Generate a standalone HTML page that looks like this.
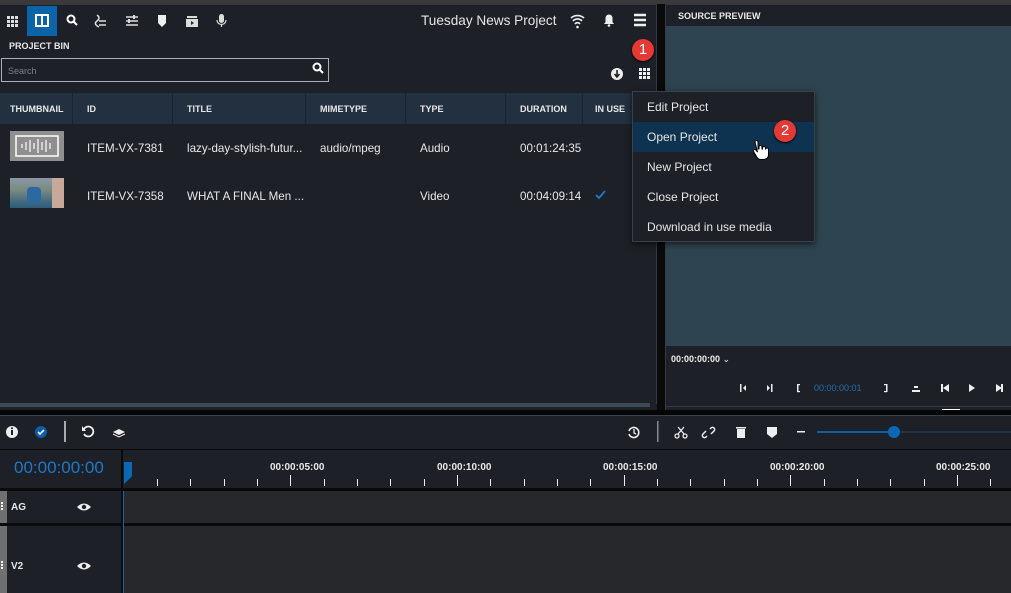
<!DOCTYPE html>
<html><head><meta charset="utf-8"><style>
*{box-sizing:border-box;margin:0;padding:0}
body{width:1011px;height:593px;background:#1d2026;font-family:"Liberation Sans",sans-serif;color:#e6e6e6;position:relative;overflow:hidden}
.a{position:absolute}
.b{font-weight:bold}
.hd{font-size:10px;font-weight:bold;color:#e8e8e8}
.cell{font-size:11.6px;color:#e8e8e8}
.mi{position:absolute;left:633px;width:181px;height:30px;font-size:12px;color:#e6e6e6;padding:8px 0 0 14px}
.badge{position:absolute;width:22px;height:22px;border-radius:50%;background:#e53935;color:#fff;font-size:15px;text-align:center;line-height:22px;box-shadow:0 1px 2px #000}
.tl{font-size:10px;font-weight:bold;color:#e8e8e8}
</style></head><body>
<div class="a" style="left:0;top:0;width:1011px;height:4px;background:#3a3a3a"></div>
<div class="a" style="left:0;top:4px;width:657px;height:400px;background:#1d2026;border-top:1px solid #333a44;border-right:1px solid #333a44"></div>
<div class="a" style="left:657px;top:4px;width:8px;height:406px;background:#0a0a0a"></div>
<svg class="a" style="left:0;top:5px" width="240" height="32">
<g fill="#ddd"><rect x="7" y="11" width="3" height="3"/><rect x="11" y="11" width="3" height="3"/><rect x="15" y="11" width="3" height="3"/><rect x="7" y="15" width="3" height="3"/><rect x="11" y="15" width="3" height="3"/><rect x="15" y="15" width="3" height="3"/><rect x="7" y="19" width="3" height="3"/><rect x="11" y="19" width="3" height="3"/><rect x="15" y="19" width="3" height="3"/></g>
<rect x="27" y="1" width="30" height="30" fill="#0b64a8"/>
<rect x="36" y="10" width="12" height="11" fill="none" stroke="#fff" stroke-width="2"/><line x1="42" y1="10" x2="42" y2="21" stroke="#fff" stroke-width="2"/>
<circle cx="71" cy="14" r="3.5" fill="none" stroke="#fff" stroke-width="2"/><line x1="73.5" y1="16.5" x2="77" y2="20" stroke="#fff" stroke-width="2"/>
<path d="M97 10 q4 3 0 6 q-4 3 2 6 M99 16 h7 M99 20h7" stroke="#ddd" stroke-width="1.5" fill="none"/>
<path d="M126 12h12M126 16h12M126 20h12" stroke="#ddd" stroke-width="1.5"/><rect x="133" y="10" width="2" height="4" fill="#ddd"/><rect x="128" y="14" width="2" height="4" fill="#ddd"/>
<path d="M158 10h8v8l-4 4l-4-4z" fill="#eee"/>
<rect x="187" y="11" width="10" height="2" fill="#ddd"/><rect x="186" y="14" width="12" height="8" fill="#ddd"/><path d="M191 16l3 2l-3 2z" fill="#1d2026"/>
<rect x="219" y="9" width="5" height="9" rx="2.5" fill="#ddd"/><path d="M217 15a4.5 4.5 0 0 0 9 0M221.5 20v2" stroke="#ddd" fill="none" stroke-width="1.2"/>
</svg>
<div class="a" style="left:421px;top:13px;font-size:13.6px;color:#e6e6e6">Tuesday News Project</div>
<svg class="a" style="left:565px;top:8px" width="90" height="26">
<path d="M6 10a10 10 0 0 1 13 0M8 13a6 6 0 0 1 9 0M10 16a3 3 0 0 1 5 0" stroke="#eee" stroke-width="1.6" fill="none"/><circle cx="12.5" cy="19" r="1.3" fill="#eee"/>
<path d="M39 16h10l-1.5-2v-4a3.5 3.5 0 0 0-7 0v4z" fill="#eee"/><circle cx="44" cy="17.5" r="1.3" fill="#eee"/>
<path d="M69 7h12M69 12h12M69 17h12" stroke="#eee" stroke-width="2.4"/>
</svg>
<div class="a hd" style="left:9px;top:41px;font-size:9px">PROJECT BIN</div>
<div class="a" style="left:1px;top:58px;width:328px;height:24px;border:1px solid #aab0b8"></div>
<div class="a" style="left:8px;top:66px;font-size:9px;color:#7c8088">Search</div>
<svg class="a" style="left:310px;top:60px" width="16" height="16"><circle cx="7" cy="7" r="3.5" fill="none" stroke="#fff" stroke-width="2"/><line x1="9.5" y1="9.5" x2="13" y2="13" stroke="#fff" stroke-width="2"/></svg>
<div class="badge" style="left:632px;top:39px">1</div>
<svg class="a" style="left:608px;top:66px" width="48" height="16">
<circle cx="9" cy="8" r="6" fill="#eee"/><path d="M9 4v6M6.5 8l2.5 3l2.5-3" stroke="#1d2026" stroke-width="1.6" fill="none"/>
<g fill="#eee"><rect x="31" y="2" width="3" height="3"/><rect x="35" y="2" width="3" height="3"/><rect x="39" y="2" width="3" height="3"/><rect x="31" y="6" width="3" height="3"/><rect x="35" y="6" width="3" height="3"/><rect x="39" y="6" width="3" height="3"/><rect x="31" y="10" width="3" height="3"/><rect x="35" y="10" width="3" height="3"/><rect x="39" y="10" width="3" height="3"/></g>
</svg>
<div class="a" style="left:0;top:93px;width:656px;height:31px;background:#223040"></div>
<div class="a" style="left:72px;top:93px;width:1px;height:31px;background:#1a2430"></div>
<div class="a" style="left:172px;top:93px;width:1px;height:31px;background:#1a2430"></div>
<div class="a" style="left:305px;top:93px;width:1px;height:31px;background:#1a2430"></div>
<div class="a" style="left:405px;top:93px;width:1px;height:31px;background:#1a2430"></div>
<div class="a" style="left:505px;top:93px;width:1px;height:31px;background:#1a2430"></div>
<div class="a" style="left:582px;top:93px;width:1px;height:31px;background:#1a2430"></div>
<div class="a hd" style="left:10px;top:104px;font-size:9px">THUMBNAIL</div>
<div class="a hd" style="left:87px;top:104px;font-size:9px">ID</div>
<div class="a hd" style="left:187px;top:104px;font-size:9px">TITLE</div>
<div class="a hd" style="left:320px;top:104px;font-size:9px">MIMETYPE</div>
<div class="a hd" style="left:420px;top:104px;font-size:9px">TYPE</div>
<div class="a hd" style="left:520px;top:104px;font-size:9px">DURATION</div>
<div class="a hd" style="left:595px;top:104px;font-size:9px">IN USE</div>
<div class="a" style="left:10px;top:131px;width:54px;height:30px;background:#8f8f8f"></div>
<svg class="a" style="left:10px;top:131px" width="54" height="30"><rect x="6" y="5" width="42" height="20" fill="none" stroke="#fff" stroke-width="1.5"/><path d="M12 13v4M16 11v8M20 9v12M24 12v6M28 8v14M32 11v8M36 9v12M40 12v6" stroke="#fff" stroke-width="1.2"/></svg>
<div class="a" style="left:10px;top:178px;width:54px;height:30px;background:linear-gradient(180deg,#8a98a6 0%,#7a8a80 40%,#4f7080 70%,#2b5c7a 100%)"></div>
<div class="a" style="left:27px;top:187px;width:14px;height:16px;background:#2a6aa0;border-radius:4px"></div>
<div class="a" style="left:52px;top:178px;width:12px;height:30px;background:#c8a898"></div>
<div class="a cell" style="left:87px;top:142px">ITEM-VX-7381</div>
<div class="a cell" style="left:187px;top:142px">lazy-day-stylish-futur...</div>
<div class="a cell" style="left:320px;top:142px">audio/mpeg</div>
<div class="a cell" style="left:420px;top:142px">Audio</div>
<div class="a cell" style="left:520px;top:142px">00:01:24:35</div>
<div class="a cell" style="left:87px;top:190px">ITEM-VX-7358</div>
<div class="a cell" style="left:187px;top:190px">WHAT A FINAL Men ...</div>
<div class="a cell" style="left:420px;top:190px">Video</div>
<div class="a cell" style="left:520px;top:190px">00:04:09:14</div>
<svg class="a" style="left:594px;top:189px" width="14" height="12"><path d="M2 6l3 3l6-7" stroke="#1e78c8" stroke-width="1.8" fill="none"/></svg>
<div class="a" style="left:0;top:403px;width:650px;height:4px;background:#3c4a58"></div>
<div class="a" style="left:665px;top:4px;width:346px;height:406px;background:#1d2026;border-top:1px solid #333a44;border-left:1px solid #333a44"></div>
<div class="a hd" style="left:678px;top:11px;font-size:9px">SOURCE PREVIEW</div>
<div class="a" style="left:666px;top:26px;width:345px;height:320px;background:#2e4450"></div>
<div class="a b" style="left:671px;top:354px;font-size:9px;color:#eee">00:00:00:00 <span style="font-weight:normal">⌄</span></div>
<div class="a" style="left:665px;top:406px;width:346px;height:1px;background:#333a44"></div>
<div class="a" style="left:942px;top:409px;width:18px;height:2px;background:#fff"></div>
<svg class="a" style="left:730px;top:378px" width="281" height="20">
<g fill="#eee"><rect x="10" y="6" width="1.5" height="8"/><path d="M16 7v6l-3-3z"/><path d="M37 7v6l3-3z"/><rect x="41" y="6" width="1.5" height="8"/>
<rect x="67" y="6" width="1.5" height="8"/><rect x="67" y="6" width="3" height="1.2"/><rect x="67" y="13" width="3" height="1.2"/>
<rect x="156" y="6" width="1.5" height="8"/><rect x="154" y="6" width="3" height="1.2"/><rect x="154" y="13" width="3" height="1.2"/>
<rect x="182" y="12" width="8" height="2"/><rect x="184" y="8" width="4" height="2"/>
<rect x="211" y="6" width="2" height="8"/><path d="M219 6v8l-6-4z"/>
<path d="M239 6v8l6-4z"/>
<path d="M266 6v8l6-4z"/><rect x="271" y="6" width="2" height="8"/></g>
</svg>
<div class="a" style="left:814px;top:383px;font-size:9px;color:#1e6eb4">00:00:00:01</div>
<div class="a" style="left:632px;top:91px;width:183px;height:151px;background:#1d2026;border:1px solid #3a3f48;box-shadow:0 2px 6px rgba(0,0,0,.6)"></div>
<div class="a" style="left:633px;top:122px;width:181px;height:30px;background:#0e3350"></div>
<div class="mi" style="top:92px">Edit Project</div>
<div class="mi" style="top:122px">Open Project</div>
<div class="mi" style="top:152px">New Project</div>
<div class="mi" style="top:182px">Close Project</div>
<div class="mi" style="top:212px">Download in use media</div>
<div class="badge" style="left:774px;top:120px">2</div>
<svg class="a" style="left:750px;top:139px" width="20" height="24"><path d="M5 3a1.5 1.5 0 0 1 3 0v7h1v-2a1.5 1.5 0 0 1 3 0v2h0.5v-1a1.5 1.5 0 0 1 3 0v1.5a1.5 1.5 0 0 1 3 0v5c0 3-2 5-5 5h-3c-2 0-3-1-4-3l-3-5a1.4 1.4 0 0 1 2.4-1.4l1.6 2z" fill="#fff" stroke="#000" stroke-width="1"/></svg>
<div class="a" style="left:0;top:410px;width:1011px;height:5px;background:#050505"></div>
<div class="a" style="left:0;top:415px;width:1011px;height:178px;background:#1d2026;border-top:1px solid #3a404a"></div>
<svg class="a" style="left:0;top:418px" width="130" height="30">
<circle cx="12" cy="14" r="6" fill="#eee"/><rect x="11" y="12" width="2" height="5" fill="#1d2026"/><rect x="11" y="9.5" width="2" height="1.6" fill="#1d2026"/>
<circle cx="41" cy="14" r="6" fill="#0d5ea6"/><path d="M38 14l2 2l4-4" stroke="#fff" stroke-width="1.6" fill="none"/>
<rect x="64" y="3" width="2" height="21" fill="#aaa"/>
<path d="M84 11a5 5 0 1 1 0 5" stroke="#eee" stroke-width="1.8" fill="none"/><path d="M82 8v5h4z" fill="#eee"/>
<path d="M113 14l6-3l6 3l-6 3z" fill="#eee"/><path d="M113 16l6 3l6-3" stroke="#eee" fill="none"/>
</svg>
<svg class="a" style="left:620px;top:418px" width="391" height="30">
<path d="M9 13a5 5 0 1 1 0 3" stroke="#eee" stroke-width="1.6" fill="none"/><path d="M14 11v4l2 1" stroke="#eee" stroke-width="1.3" fill="none"/>
<rect x="37" y="3" width="1.5" height="21" fill="#888"/>
<circle cx="57" cy="18" r="2" fill="none" stroke="#eee" stroke-width="1.3"/><circle cx="65" cy="18" r="2" fill="none" stroke="#eee" stroke-width="1.3"/><path d="M58 16l6-7M64 16l-6-7" stroke="#eee" stroke-width="1.3"/>
<path d="M87 18l-1 1a2 2 0 0 1-3-3l3-3M90 11l1-1a2 2 0 0 1 3 3l-3 3" stroke="#eee" stroke-width="1.5" fill="none"/>
<rect x="117" y="11" width="8" height="9" fill="#eee"/><rect x="116" y="9" width="10" height="1.5" fill="#eee"/>
<path d="M147 9h10v7l-5 4l-5-4z" fill="#eee"/>
<rect x="177" y="13" width="8" height="1.5" fill="#eee"/>
<line x1="197" y1="14" x2="274" y2="14" stroke="#0d5ea6" stroke-width="2"/>
<line x1="274" y1="14" x2="391" y2="14" stroke="#1e3346" stroke-width="2"/>
<circle cx="274" cy="14" r="6" fill="#0d68b4"/>
</svg>
<div class="a" style="left:0;top:449px;width:1011px;height:1px;background:#0a0a0a"></div>
<div class="a" style="left:121px;top:449px;width:2px;height:144px;background:#0a0a0a"></div>
<div class="a" style="left:14px;top:458px;font-size:17px;color:#1e78c8">00:00:00:00</div>
<div class="a" style="left:0;top:488px;width:1011px;height:3px;background:#0a0a0a"></div>
<div class="a" style="left:124px;top:462px;width:8px;height:22px;background:#0d68b4;clip-path:polygon(0 0,100% 0,100% 65%,0 100%)"></div>
<div class="a tl" style="left:270px;top:462px">00:00:05:00</div>
<div class="a tl" style="left:437px;top:462px">00:00:10:00</div>
<div class="a tl" style="left:603px;top:462px">00:00:15:00</div>
<div class="a tl" style="left:770px;top:462px">00:00:20:00</div>
<div class="a tl" style="left:936px;top:462px">00:00:25:00</div>
<svg class="a" style="left:0;top:470px" width="1011" height="20"><g stroke="#eee" stroke-width="1">
<line x1="157.5" y1="9" x2="157.5" y2="16"/><line x1="190.5" y1="9" x2="190.5" y2="16"/><line x1="224.5" y1="9" x2="224.5" y2="16"/><line x1="257.5" y1="9" x2="257.5" y2="16"/><line x1="290.5" y1="5" x2="290.5" y2="16"/>
<line x1="324.5" y1="9" x2="324.5" y2="16"/><line x1="357.5" y1="9" x2="357.5" y2="16"/><line x1="390.5" y1="9" x2="390.5" y2="16"/><line x1="424.5" y1="9" x2="424.5" y2="16"/><line x1="457.5" y1="5" x2="457.5" y2="16"/>
<line x1="490.5" y1="9" x2="490.5" y2="16"/><line x1="524.5" y1="9" x2="524.5" y2="16"/><line x1="557.5" y1="9" x2="557.5" y2="16"/><line x1="590.5" y1="9" x2="590.5" y2="16"/><line x1="624.5" y1="5" x2="624.5" y2="16"/>
<line x1="657.5" y1="9" x2="657.5" y2="16"/><line x1="690.5" y1="9" x2="690.5" y2="16"/><line x1="724.5" y1="9" x2="724.5" y2="16"/><line x1="757.5" y1="9" x2="757.5" y2="16"/><line x1="790.5" y1="5" x2="790.5" y2="16"/>
<line x1="824.5" y1="9" x2="824.5" y2="16"/><line x1="857.5" y1="9" x2="857.5" y2="16"/><line x1="890.5" y1="9" x2="890.5" y2="16"/><line x1="924.5" y1="9" x2="924.5" y2="16"/><line x1="957.5" y1="5" x2="957.5" y2="16"/><line x1="990.5" y1="9" x2="990.5" y2="16"/>
</g></svg>
<div class="a" style="left:123px;top:491px;width:888px;height:32px;background:#26282c"></div>
<div class="a" style="left:0;top:523px;width:1011px;height:3px;background:#0a0a0a"></div>
<div class="a" style="left:123px;top:526px;width:888px;height:67px;background:#26282c"></div>
<div class="a" style="left:0;top:491px;width:7px;height:32px;background:#707070"></div>
<div class="a" style="left:0;top:526px;width:7px;height:67px;background:#707070"></div>
<div class="a" style="left:1px;top:502px;width:2px;height:8px;border-left:2px dotted #fff"></div>
<div class="a" style="left:1px;top:561px;width:2px;height:8px;border-left:2px dotted #fff"></div>
<div class="a b" style="left:11px;top:502px;font-size:10px">AG</div>
<div class="a b" style="left:11px;top:561px;font-size:10px">V2</div>
<svg class="a" style="left:76px;top:501px" width="16" height="12"><path d="M1 6q7-7 14 0q-7 7-14 0z" fill="#eee"/><circle cx="8" cy="6" r="2.2" fill="#1d2026"/></svg>
<svg class="a" style="left:76px;top:560px" width="16" height="12"><path d="M1 6q7-7 14 0q-7 7-14 0z" fill="#eee"/><circle cx="8" cy="6" r="2.2" fill="#1d2026"/></svg>
<div class="a" style="left:123px;top:491px;width:1px;height:102px;background:#0d68b4"></div>
</body></html>
